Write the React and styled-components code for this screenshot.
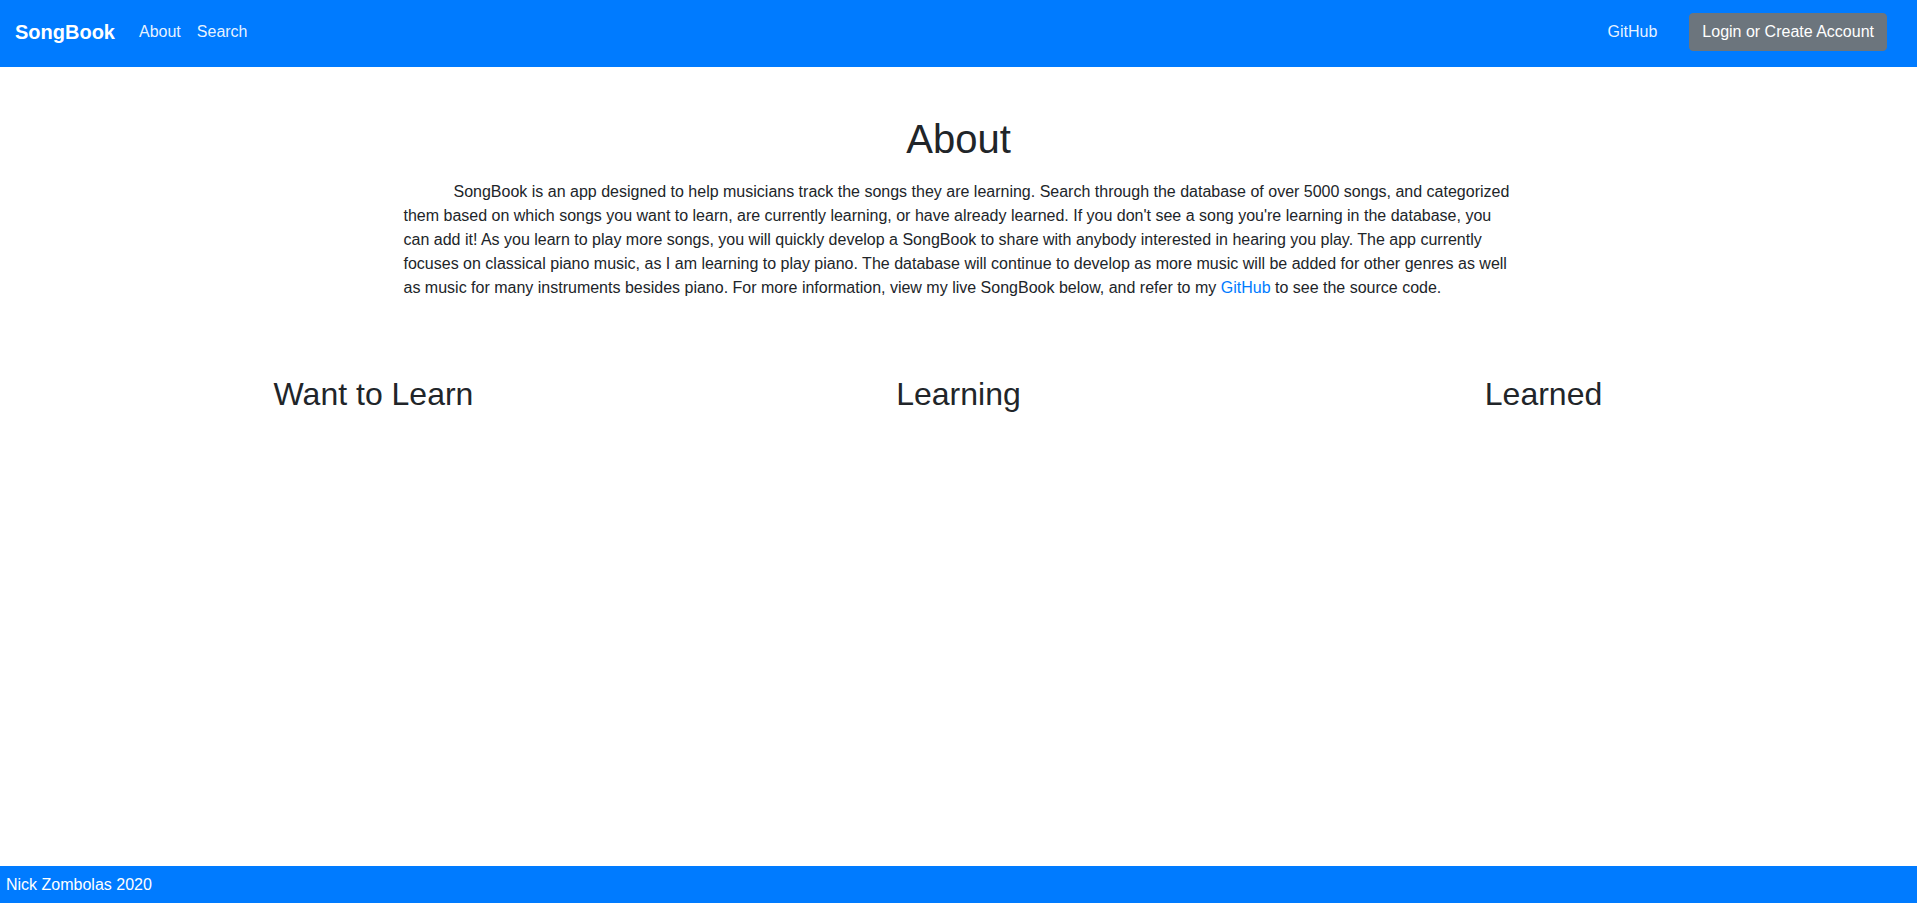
import React from "react";
import styled, { createGlobalStyle } from "styled-components";

const GlobalStyle = createGlobalStyle`
  html, body {
    margin: 0;
    padding: 0;
  }
  body {
    font-family: "Liberation Sans", Arial, Helvetica, sans-serif;
    font-size: 16px;
    line-height: 1.5;
    color: #212529;
    background: #fff;
  }
  * { box-sizing: border-box; }
`;

const Page = styled.div`
  display: flex;
  flex-direction: column;
  min-height: 100vh;
`;

const NavBar = styled.nav`
  height: 67px;
  background: #007bff;
  display: flex;
  align-items: center;
  justify-content: space-between;
  padding: 0 16px 3px 15px;
`;

const NavGroup = styled.div`
  display: flex;
  align-items: center;
`;

const Brand = styled.a`
  color: #fff;
  font-size: 20px;
  font-weight: 700;
  line-height: 30px;
  margin-right: 16px;
  text-decoration: none;
`;

const NavLink = styled.a`
  color: rgba(255, 255, 255, 0.92);
  font-size: 16px;
  line-height: 24px;
  padding: 8px;
  text-decoration: none;
  margin-right: ${(p) => p.$mr || 0}px;
`;

const Button = styled.button`
  font-family: inherit;
  font-size: 16px;
  line-height: 24px;
  padding: 6px 12px;
  border: 1px solid #6c757d;
  border-radius: 4px;
  background: #6c757d;
  color: #fff;
  margin-right: 14px;
  cursor: pointer;
`;

const Main = styled.main`
  flex: 1;
  padding-top: 48px;
`;

const Container = styled.div`
  max-width: 1140px;
  margin: 0 auto;
  padding: 0 15px;
`;

const Title = styled.h1`
  font-size: 40px;
  font-weight: 500;
  line-height: 1.2;
  text-align: center;
  margin: 0 0 17px;
`;

const Intro = styled.p`
  margin: 0;
  text-indent: 50px;
  line-height: 24px;
`;

const TextLink = styled.a`
  color: #007bff;
  text-decoration: none;
`;

const Columns = styled.section`
  display: grid;
  grid-template-columns: repeat(3, 1fr);
  width: 1755px;
  margin: 75px auto 0;
`;

const ColumnTitle = styled.h2`
  font-size: 32px;
  font-weight: 500;
  line-height: 1.2;
  text-align: center;
  margin: 0;
`;

const Footer = styled.footer`
  height: 37px;
  background: #007bff;
  color: #fff;
  display: flex;
  align-items: center;
  padding: 0 6px;
  font-size: 16px;
`;

export default function App() {
  return (
    <Page>
      <GlobalStyle />
      <NavBar>
        <NavGroup>
          <Brand href="#">SongBook</Brand>
          <NavLink href="#">About</NavLink>
          <NavLink href="#">Search</NavLink>
        </NavGroup>
        <NavGroup>
          <NavLink href="#" $mr={24}>GitHub</NavLink>
          <Button>Login or Create Account</Button>
        </NavGroup>
      </NavBar>
      <Main>
        <Container>
          <Title>About</Title>
          <Intro>
            SongBook is an app designed to help musicians track the songs they are learning. Search
            through the database of over 5000 songs, and categorized them based on which songs you
            want to learn, are currently learning, or have already learned. If you don't see a song
            you're learning in the database, you can add it! As you learn to play more songs, you will
            quickly develop a SongBook to share with anybody interested in hearing you play. The app
            currently focuses on classical piano music, as I am learning to play piano. The database
            will continue to develop as more music will be added for other genres as well as music for
            many instruments besides piano. For more information, view my live SongBook below, and
            refer to my <TextLink href="#">GitHub</TextLink> to see the source code.
          </Intro>
        </Container>
        <Columns>
          <ColumnTitle>Want to Learn</ColumnTitle>
          <ColumnTitle>Learning</ColumnTitle>
          <ColumnTitle>Learned</ColumnTitle>
        </Columns>
      </Main>
      <Footer>Nick Zombolas 2020</Footer>
    </Page>
  );
}
